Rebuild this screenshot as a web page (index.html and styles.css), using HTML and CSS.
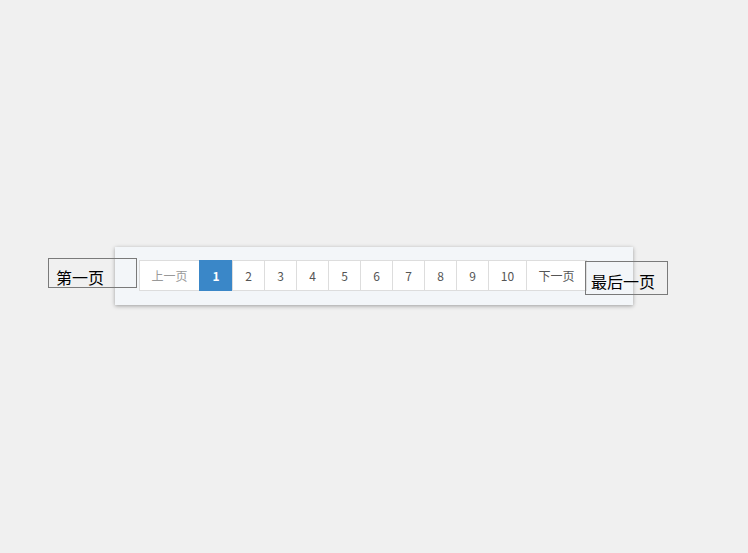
FILE: index.html
```html
<!DOCTYPE html>
<html lang="zh">
<head>
<meta charset="utf-8">
<title>分页</title>
<link rel="stylesheet" href="styles.css">
</head>
<body>
<div class="stage">
  <div class="row">
    <button class="edge-btn first">第一页</button>
    <div class="panel">
      <ul class="pager">
        <li class="cell wide disabled">上一页</li>
        <li class="cell active">1</li>
        <li class="cell">2</li>
        <li class="cell">3</li>
        <li class="cell">4</li>
        <li class="cell">5</li>
        <li class="cell">6</li>
        <li class="cell">7</li>
        <li class="cell">8</li>
        <li class="cell">9</li>
        <li class="cell ten">10</li>
        <li class="cell wide">下一页</li>
      </ul>
    </div>
    <button class="edge-btn last">最后一页</button>
  </div>
</div>
</body>
</html>
```
FILE: styles.css
```css
html, body {
  margin: 0;
  padding: 0;
  background: #f0f0f0;
}

.stage {
  padding: 247px 0 0 48px;
  width: 748px;
  height: 553px;
  box-sizing: border-box;
}

.row {
  display: flex;
  align-items: flex-start;
}

.edge-btn {
  position: relative;
  z-index: 1;
  box-sizing: border-box;
  margin: 0;
  background: transparent;
  border: 1px solid #7a7a7a;
  font-family: "Noto Sans CJK SC", sans-serif;
  font-size: 16px;
  line-height: 16px;
  color: #000;
  text-align: left;
  cursor: pointer;
}

.first {
  width: 89px;
  height: 30px;
  margin-top: 11px;
  padding: 10px 0 2px 7px;
}

.last {
  width: 83px;
  height: 34px;
  margin-top: 14px;
  margin-left: -48px;
  padding: 11px 0 5px 5px;
}

.panel {
  box-sizing: border-box;
  width: 518px;
  height: 58px;
  margin-left: -22px;
  padding: 13px 0 0 24px;
  background: #f3f6f9;
  box-shadow: 0 1px 4px rgba(0, 0, 0, 0.35);
}

.pager {
  display: flex;
  margin: 0;
  padding: 0;
  list-style: none;
}

.cell {
  box-sizing: border-box;
  width: 33px;
  height: 31px;
  margin-left: -1px;
  border: 1px solid #dddddd;
  background: #fff;
  color: #555;
  font-family: "Noto Sans CJK SC", sans-serif;
  font-size: 12px;
  display: flex;
  align-items: center;
  justify-content: center;
}

.cell:first-child {
  margin-left: 0;
}

.cell.wide {
  width: 61px;
}

.cell.ten {
  width: 39px;
}

.cell.disabled {
  color: #999;
}

.cell.active {
  width: 34px;
  background: #3a87c8;
  border-color: #3a87c8;
  color: #fff;
  font-weight: bold;
}
```
